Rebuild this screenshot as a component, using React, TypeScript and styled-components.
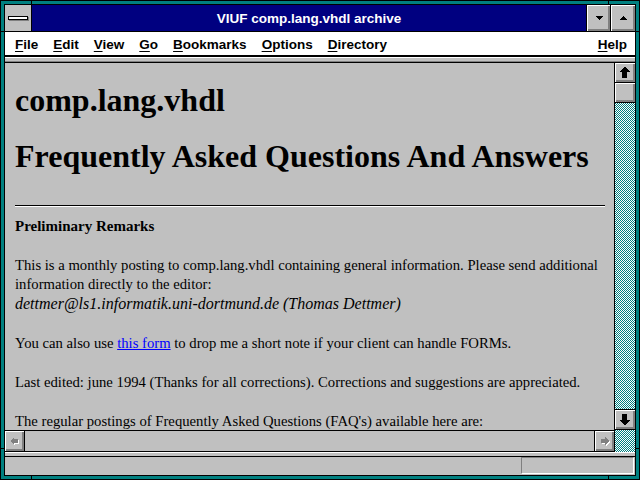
import React from 'react';
import styled, { createGlobalStyle } from 'styled-components';

const GlobalStyle = createGlobalStyle`
  html, body {
    margin: 0;
    padding: 0;
    overflow: hidden;
    background: #008080;
  }
`;

const Frame = styled.div`
  position: relative;
  width: 640px;
  height: 480px;
  box-sizing: border-box;
  background: #008080;
  border: 1px solid #000;
  padding: 3px;
`;

// resize marks on the teal border
const Tick = styled.div<{ $side: 'top' | 'bottom' | 'left' | 'right'; $at: number }>`
  position: absolute;
  background: #000;
  ${p =>
    p.$side === 'top' || p.$side === 'bottom'
      ? `${p.$side}: 0; left: ${p.$at}px; width: 1px; height: 3px;`
      : `${p.$side}: 0; top: ${p.$at}px; width: 3px; height: 1px;`}
`;

const Window = styled.div`
  height: 100%;
  box-sizing: border-box;
  border: 1px solid #000;
  display: flex;
  flex-direction: column;
  background: #c0c0c0;
`;

const TitleBar = styled.div`
  flex: none;
  height: 26px;
  display: flex;
  border-bottom: 1px solid #000;
`;

const SysBox = styled.div`
  width: 26px;
  border-right: 1px solid #000;
  background: #c0c0c0;
  display: flex;
  align-items: center;
  justify-content: center;
`;

const SysBar = styled.div`
  width: 18px;
  height: 2px;
  background: #fff;
  border: 1px solid #000;
  box-shadow: 1px 1px 0 #808080;
  margin-right: 1px;
`;

const Caption = styled.div`
  flex: 1;
  background: #000080;
  color: #fff;
  font: 700 13.5px 'Liberation Sans', Arial, sans-serif;
  display: flex;
  align-items: center;
  justify-content: center;
`;

const TitleButton = styled.div<{ $w: number }>`
  width: ${p => p.$w}px;
  border-left: 1px solid #000;
  background: #c0c0c0;
  box-shadow: inset 1px 1px 0 #fff, inset -1px -1px 0 #808080, inset -2px -2px 0 #808080;
  display: flex;
  align-items: center;
  justify-content: center;
`;

const MenuBar = styled.div`
  flex: none;
  height: 25px;
  background: #fff;
  border-bottom: 2px solid #000;
  display: flex;
  align-items: center;
  gap: 15px;
  padding: 1px 8px 0 10px;
  box-sizing: border-box;
  font: 700 13.5px 'Liberation Sans', Arial, sans-serif;
  color: #000;
`;

const MenuItem = styled.span<{ $right?: boolean }>`
  ${p => (p.$right ? 'margin-left: auto;' : '')}
  u {
    text-decoration-thickness: 1px;
    text-underline-offset: 2px;
  }
`;

const Strip = styled.div`
  flex: none;
  height: 6px;
  box-sizing: border-box;
  background: #c0c0c0;
  border-top: 1px solid #fff;
  border-bottom: 1px solid #000;
  box-shadow: inset 0 -1px 0 #808080;
`;

const BottomStrip = styled(Strip)`
  height: 5px;
  box-shadow: none;
`;

const Body = styled.div`
  flex: 1;
  min-height: 0;
  display: flex;
`;

const Main = styled.div`
  flex: 1;
  min-width: 0;
  display: flex;
  flex-direction: column;
`;

const Viewport = styled.div`
  flex: 1;
  overflow: hidden;
  background: #c0c0c0;
  padding: 19px 9px 0 10px;
  color: #000;
  font-family: 'Liberation Serif', 'Times New Roman', serif;
`;

const Heading = styled.h1<{ $gap: number }>`
  margin: 0 0 ${p => p.$gap}px;
  font-size: 32px;
  line-height: 37px;
  font-weight: 700;
`;

const Rule = styled.hr`
  margin: 0 0 10px;
  height: 0;
  border: 0;
  border-top: 1px solid #000;
  border-bottom: 1px solid #fff;
`;

const SubHeading = styled.div`
  font-size: 15px;
  line-height: 19px;
  font-weight: 700;
`;

const Para = styled.p`
  margin: 20px 0 0;
  font-size: 14.7px;
  line-height: 19px;
  em {
    font-size: 16px;
    font-style: italic;
  }
  a {
    color: #0000ff;
    text-decoration: underline;
  }
`;

const HScroll = styled.div`
  flex: none;
  height: 20px;
  border-top: 1px solid #000;
  border-bottom: 1px solid #000;
  display: flex;
`;

const HTrack = styled.div`
  flex: 1;
  background: #c0c0c0;
`;

const VScroll = styled.div`
  flex: none;
  width: 20px;
  border-left: 1px solid #000;
  display: flex;
  flex-direction: column;
`;

const Track = styled.div<{ $h?: number }>`
  flex: ${p => (p.$h ? `0 0 ${p.$h}px` : '1')};
  min-height: 0;
  overflow: hidden;
  svg {
    display: block;
  }
`;

const Bevel = styled.div<{ $sides: string; $w?: number; $h?: number }>`
  flex: none;
  width: ${p => (p.$w ? `${p.$w}px` : 'auto')};
  height: ${p => (p.$h ? `${p.$h}px` : 'auto')};
  background: #c0c0c0;
  box-shadow: inset 1px 1px 0 #fff, inset -1px -1px 0 #808080, inset -2px -2px 0 #808080;
  ${p =>
    p.$sides
      .split(' ')
      .filter(Boolean)
      .map(s => `border-${s}: 1px solid #000;`)
      .join('')}
  svg {
    display: block;
  }
`;

const StatusBar = styled.div`
  flex: none;
  height: 18px;
  display: flex;
  justify-content: flex-end;
  align-items: flex-start;
  padding-right: 1px;
`;

const StatusBox = styled.div`
  width: 113px;
  height: 17px;
  box-sizing: border-box;
  border: 1px solid;
  border-color: #808080 #fff #fff #808080;
`;

// 1px teal/white checkerboard of the scroll track
const Dither = ({ id }: { id: string }) => (
  <svg width="20" height="400" shapeRendering="crispEdges">
    <defs>
      <pattern id={id} width="2" height="2" patternUnits="userSpaceOnUse">
        <rect width="2" height="2" fill="#fff" />
        <rect width="1" height="1" fill="#008080" />
        <rect x="1" y="1" width="1" height="1" fill="#008080" />
      </pattern>
    </defs>
    <rect width="20" height="400" fill={`url(#${id})`} />
  </svg>
);

const Tri = ({ up }: { up?: boolean }) => (
  <svg width="12" height="8" viewBox="0 0 12 8" shapeRendering="crispEdges">
    <polygon points={up ? '2,6 10,6 6,2' : '2,2 10,2 6,6'} fill="#000" />
  </svg>
);

const VArrow = ({ down }: { down?: boolean }) => (
  <svg width="19" height="19" viewBox="0 0 19 19" shapeRendering="crispEdges">
    <polygon
      points={
        down
          ? '9.5,15.5 15,10 12,10 12,4 7,4 7,10 4,10'
          : '9.5,3.5 15,9 12,9 12,15 7,15 7,9 4,9'
      }
      fill="#000"
    />
  </svg>
);

const HArrow = ({ right }: { right?: boolean }) => {
  const pts = right ? '14,10 10,6 10,8 6,8 6,12 10,12 10,14' : '5,10 9,6 9,8 13,8 13,12 9,12 9,14';
  return (
    <svg width="19" height="20" viewBox="0 0 19 20" shapeRendering="crispEdges">
      <polygon points={pts} fill="#fff" transform="translate(1 1)" />
      <polygon points={pts} fill="#808080" />
    </svg>
  );
};

const menus = ['File', 'Edit', 'View', 'Go', 'Bookmarks', 'Options', 'Directory'];

export default function App() {
  return (
    <>
      <GlobalStyle />
      <Frame>
        <Tick $side="top" $at={30} />
        <Tick $side="top" $at={607} />
        <Tick $side="bottom" $at={30} />
        <Tick $side="bottom" $at={607} />
        <Tick $side="left" $at={30} />
        <Tick $side="left" $at={447} />
        <Tick $side="right" $at={30} />
        <Tick $side="right" $at={447} />
        <Window>
          <TitleBar>
            <SysBox>
              <SysBar />
            </SysBox>
            <Caption>VIUF comp.lang.vhdl archive</Caption>
            <TitleButton $w={23}>
              <Tri />
            </TitleButton>
            <TitleButton $w={24}>
              <Tri up />
            </TitleButton>
          </TitleBar>
          <MenuBar>
            {menus.map(m => (
              <MenuItem key={m}>
                <u>{m[0]}</u>
                {m.slice(1)}
              </MenuItem>
            ))}
            <MenuItem $right>
              <u>H</u>elp
            </MenuItem>
          </MenuBar>
          <Strip />
          <Body>
            <Main>
              <Viewport>
                <Heading $gap={19}>comp.lang.vhdl</Heading>
                <Heading $gap={30}>Frequently Asked Questions And Answers</Heading>
                <Rule />
                <SubHeading>Preliminary Remarks</SubHeading>
                <Para>
                  This is a monthly posting to comp.lang.vhdl containing general information. Please send
                  additional information directly to the editor:
                  <br />
                  <em>dettmer@ls1.informatik.uni-dortmund.de (Thomas Dettmer)</em>
                </Para>
                <Para>
                  You can also use <a href="#form">this form</a> to drop me a short note if your client can
                  handle FORMs.
                </Para>
                <Para>
                  Last edited: june 1994 (Thanks for all corrections). Corrections and suggestions are
                  appreciated.
                </Para>
                <Para>The regular postings of Frequently Asked Questions (FAQ's) available here are:</Para>
              </Viewport>
              <HScroll>
                <Bevel $sides="right" $w={19}>
                  <HArrow />
                </Bevel>
                <HTrack />
                <Bevel $sides="left" $w={19}>
                  <HArrow right />
                </Bevel>
              </HScroll>
            </Main>
            <VScroll>
              <Bevel $sides="bottom" $h={19}>
                <VArrow />
              </Bevel>
              <Bevel $sides="bottom" $h={19} />
              <Track>
                <Dither id="dither-a" />
              </Track>
              <Bevel $sides="top bottom" $h={19}>
                <VArrow down />
              </Bevel>
              <Track $h={22}>
                <Dither id="dither-b" />
              </Track>
            </VScroll>
          </Body>
          <BottomStrip />
          <StatusBar>
            <StatusBox />
          </StatusBar>
        </Window>
      </Frame>
    </>
  );
}
